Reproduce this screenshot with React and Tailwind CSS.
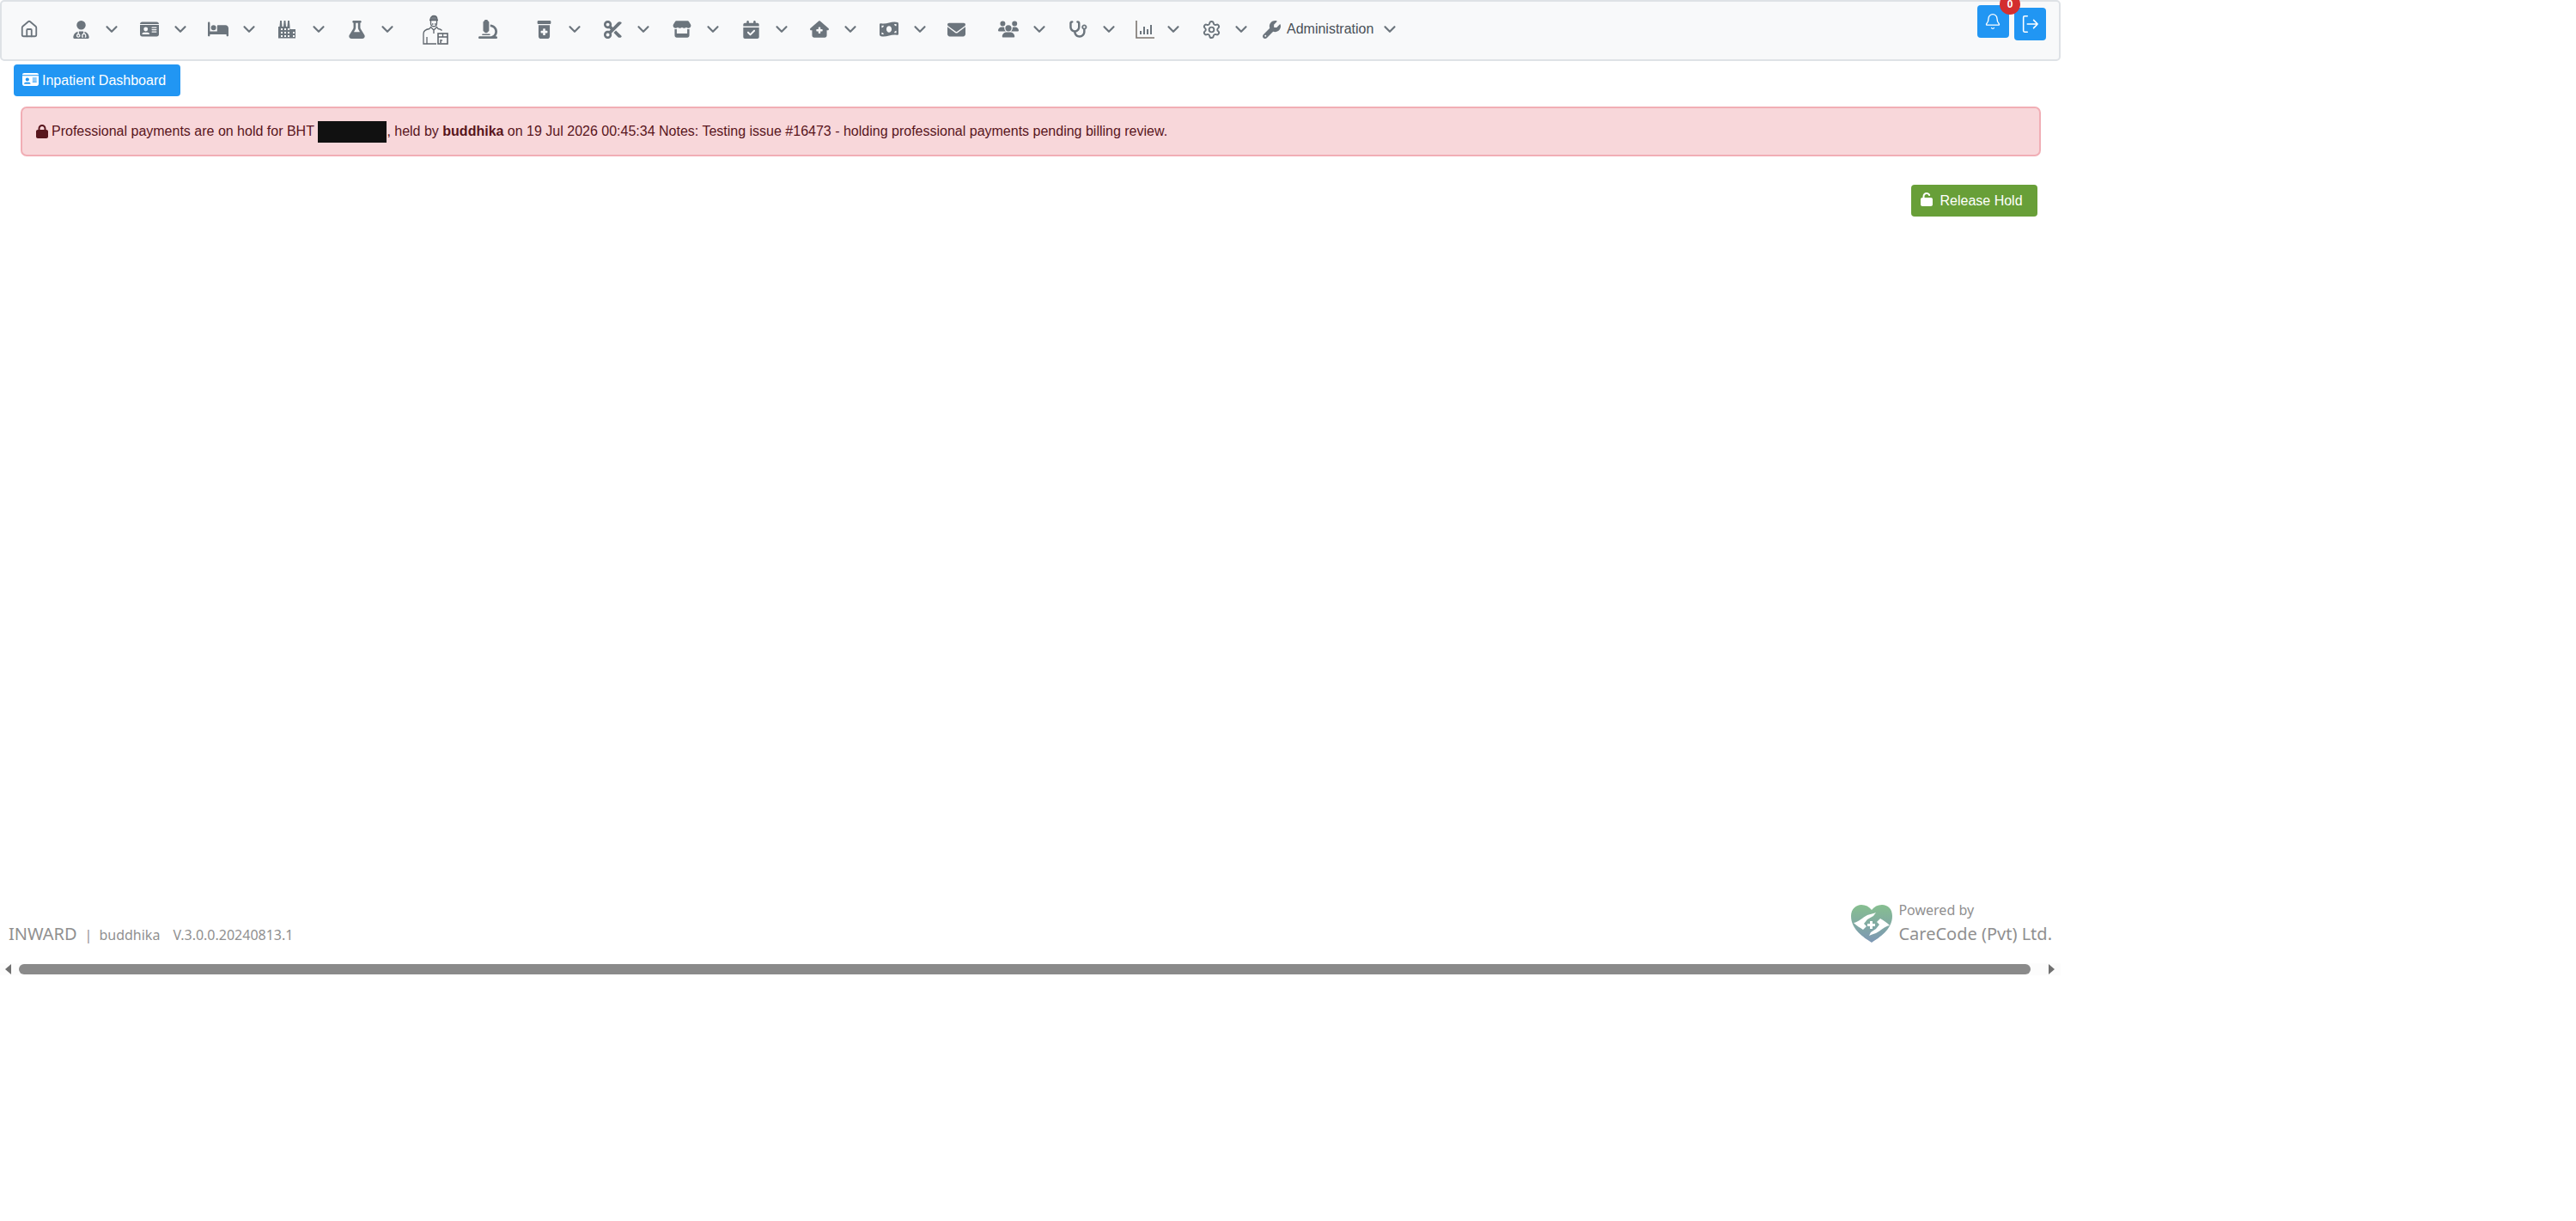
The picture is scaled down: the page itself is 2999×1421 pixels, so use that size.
import { ChevronDown, House, Settings, Bell } from 'lucide-react';
import {
  FaUserDoctor,
  FaIdCard,
  FaBed,
  FaFlask,
  FaMicroscope,
  FaPrescriptionBottleMedical,
  FaScissors,
  FaStore,
  FaCalendarCheck,
  FaHouseMedical,
  FaMoneyBillWave,
  FaEnvelope,
  FaUsers,
  FaStethoscope,
  FaWrench,
  FaLock,
  FaUnlock,
} from 'react-icons/fa6';

const FactoryIcon = () => (
  <svg width="24" height="24" viewBox="0 0 24 24" fill="#6c757d">
    <path
      fillRule="evenodd"
      d="M1 22V9h1.5l.6-7h1.8l.6 7h1.5l.6-7h1.8l.6 7h1.5l.6-7h1.8l.6 7v3h6.500v10.500H1zM4 11h2v2H4zM8 11h2v2H8zM12 11h2v2h-2zM4 15h2v2H4zM8 15h2v2H8zM12 15h2v2h-2zM4 19h2v2H4zM8 19h2v2H8zM12 19h2v2h-2zM18 15h2v2h-2zM18 19h2v2h-2z"
    />
  </svg>
);

const ChartIcon = () => (
  <svg width="24" height="24" viewBox="0 0 24 24" fill="none" stroke="#7b746f" strokeWidth="1.6">
    <path d="M2 2v20h21" />
    <path d="M7 18v-4M11 18V9M15 18v-6M19 18V7" strokeWidth="2" stroke="#6c757d" />
  </svg>
);

const DeliveryIcon = () => (
  <svg width="30" height="36" viewBox="0 0 30 36" fill="none" stroke="#5f666d" strokeWidth="1.3">
    <path d="M9 7c0-6 8-6 8 0" fill="#7a8188" />
    <path d="M8 7.500h10M9.500 8v3c0 5 7 5 7 0V8" />
    <path d="M11 12h1.500M14 12h1.500" />
    <path d="M10 15l-2 2.500c-4 .5-7 2-7 6V35h15" />
    <path d="M16 15l2 2.500c2 .2 3.500.8 4.500 2" />
    <path d="M10 16l3 3 3-3M13 19v4M5 27v8" />
    <rect x="18" y="23" width="11" height="12" strokeWidth="1.6" />
    <path d="M23.500 23v4M18 27h11M20 31h3M20 33h2" />
  </svg>
);

const LogoutIcon = () => (
  <svg width="22" height="22" viewBox="0 0 24 24" fill="none" stroke="#fff" strokeWidth="1.7" strokeLinecap="round" strokeLinejoin="round">
    <path d="M9 2H5.500C4.500 2 4 2.500 4 3.500v17c0 1 .5 1.500 1.500 1.500H9" />
    <path d="M9 12h13M17 7l5 5-5 5" />
  </svg>
);

const CareCodeLogo = () => (
  <svg width="50" height="44" viewBox="0 0 50 44">
    <defs>
      <linearGradient id="heart" x1="0" y1="0" x2="0" y2="1">
        <stop offset="0" stopColor="#86bf8f" />
        <stop offset="1" stopColor="#7d97b5" />
      </linearGradient>
    </defs>
    <path
      fill="url(#heart)"
      d="M25 44C16 38 1 29 1 13 1 5 7 0 13 0c5 0 9 2 12 6 3-4 7-6 12-6 7 0 12 5 12 13 0 16-15 25-24 31z"
    />
    <path d="M4 21c6-1 10-6 16-9 3-1 8-2 10-3l-3 4-7 4-4 5 3 3-4 4c-3-2-8-5-11-8z" fill="#fff" />
    <path d="M46 24c-6 1-10 6-16 9-3 1-6 2-8 3l2-4 6-4 4-5-3-3 4-4c4 2 8 5 11 8z" fill="#fff" />
    <path d="M23 19h3v3h3v3h-3v3h-3v-3h-3v-3h3z" fill="#fff" />
  </svg>
);

const navItems = [
  { icon: <House size={22} strokeWidth={2} />, width: 'w-[60px]' },
  { icon: <FaUserDoctor size={21} />, width: 'w-[80px]', menu: true },
  { icon: <FaIdCard size={22} />, width: 'w-[80px]', menu: true },
  { icon: <FaBed size={24} />, width: 'w-[81px]', menu: true },
  { icon: <FactoryIcon />, width: 'w-[80px]', menu: true },
  { icon: <FaFlask size={21} />, width: 'w-[92px]', menu: true },
  { icon: <DeliveryIcon />, width: 'w-[61px]' },
  { icon: <FaMicroscope size={22} />, width: 'w-[65px]' },
  { icon: <FaPrescriptionBottleMedical size={21} />, width: 'w-[80px]', menu: true },
  { icon: <FaScissors size={21} />, width: 'w-[81px]', menu: true },
  { icon: <FaStore size={22} />, width: 'w-[80px]', menu: true },
  { icon: <FaCalendarCheck size={21} />, width: 'w-[80px]', menu: true },
  { icon: <FaHouseMedical size={22} />, width: 'w-[81px]', menu: true },
  { icon: <FaMoneyBillWave size={22} />, width: 'w-[78px]', menu: true },
  { icon: <FaEnvelope size={21} />, width: 'w-[61px]' },
  { icon: <FaUsers size={24} />, width: 'w-[81px]', menu: true },
  { icon: <FaStethoscope size={22} />, width: 'w-[78px]', menu: true },
  { icon: <ChartIcon />, width: 'w-[77px]', menu: true, chevron: '-ml-[3px]' },
  { icon: <Settings size={23} strokeWidth={2} />, width: 'w-[78px]', menu: true, chevron: '-ml-[1px]' },
];

const NavItem = ({ icon, width, menu, chevron }) => (
  <div className={`flex items-center shrink-0 ${width}`}>
    <div className="flex items-center justify-center w-[36px] h-[36px] text-[#6c757d]">{icon}</div>
    {menu && (
      <div className={`flex items-center justify-center w-[36px] text-[#6c757d] ${chevron || ''}`}>
        <ChevronDown size={22} strokeWidth={2.4} />
      </div>
    )}
  </div>
);

export default function App() {
  return (
    <div className="w-[2399px] h-[1421px] bg-white font-['Liberation_Sans',sans-serif] text-[16px]">
      <div className="flex flex-col h-[1135px]">
        <nav className="relative flex h-[71px] items-center pl-[14px] pr-[15px] pb-[3px] bg-[#f8f9fa] border-2 border-[#dee2e6] rounded-[5px]">
          {navItems.map((item, index) => (
            <NavItem key={index} {...item} />
          ))}
          <div className="flex items-center shrink-0 text-[#495057]">
            <FaWrench size={21} className="text-[#6c757d] mr-[7px]" />
            <span>Administration</span>
            <ChevronDown size={22} strokeWidth={2.4} className="ml-[8px] text-[#6c757d]" />
          </div>
          <div className="flex ml-auto self-start gap-[5.5px] mt-[4px]">
            <button className="relative flex items-center justify-center w-[37.5px] h-[37.5px] bg-[#2196f3] rounded-[4px] text-white">
              <Bell size={20} strokeWidth={1.6} />
              <span className="absolute -top-[13px] right-[-13px] flex items-center justify-center w-[24px] h-[24px] rounded-full bg-[#d32f2f] text-[12px] font-bold text-white">
                0
              </span>
            </button>
            <button className="flex items-center justify-center w-[37.5px] h-[37.5px] mt-[3px] bg-[#2196f3] rounded-[4px]">
              <LogoutIcon />
            </button>
          </div>
        </nav>

        <button className="flex items-center self-start ml-[16px] mt-[4px] w-[194px] h-[37px] pl-[10px] bg-[#2196f3] rounded-[4px] text-white">
          <FaIdCard size={19} className="mr-[4px] -mt-[3px]" />
          <span>Inpatient Dashboard</span>
        </button>

        <div className="flex items-center ml-[24px] mt-[12px] h-[58px] w-[2352px] px-[15px] bg-[#f8d7da] border-2 border-[#f1aeb5] rounded-[7px] text-[#58151c]">
          <FaLock size={16} className="mr-[3px]" />
          <span>Professional payments are on hold for BHT&nbsp;</span>
          <span className="inline-block w-[80px] h-[25px] bg-[#111111]" />
          <span>
            , held by <b>buddhika</b> on 19 Jul 2026 00:45:34 Notes: Testing issue #16473 - holding
            professional payments pending billing review.
          </span>
        </div>

        <div className="flex justify-end mt-[33px] mr-[27px]">
          <button className="flex items-center w-[147.5px] h-[37px] pl-[10px] bg-[#689f38] rounded-[4px] text-white">
            <FaUnlock size={16} className="mr-[8px] -mt-[3px]" />
            <span>Release Hold</span>
          </button>
        </div>

        <footer className="flex items-end justify-between mt-auto pl-[10px] pr-[10px] font-['Noto_Sans',sans-serif] text-[#909090]">
          <div className="flex items-baseline mb-[19px]">
            <span className="text-[20px]">INWARD</span>
            <span className="ml-[9px]">|</span>
            <span className="ml-[8px]">buddhika</span>
            <span className="ml-[15px]">V.3.0.0.20240813.1</span>
          </div>
          <div className="flex items-center mb-[18px]">
            <CareCodeLogo />
            <div className="flex flex-col ml-[6px]">
              <span className="leading-[24px]">Powered by</span>
              <span className="text-[20px] leading-[32px]">CareCode (Pvt) Ltd.</span>
            </div>
          </div>
        </footer>

        <div className="flex items-center h-[14px] w-full bg-[#fcfcfc]">
          <div className="w-0 h-0 ml-[6px] border-y-[6px] border-y-transparent border-r-[7px] border-r-[#707070]" />
          <div className="w-[2342px] h-[12px] ml-[9px] rounded-full bg-[#8a8a8a]" />
          <div className="w-0 h-0 ml-[21px] border-y-[6px] border-y-transparent border-l-[7px] border-l-[#707070]" />
        </div>
      </div>
    </div>
  );
}
